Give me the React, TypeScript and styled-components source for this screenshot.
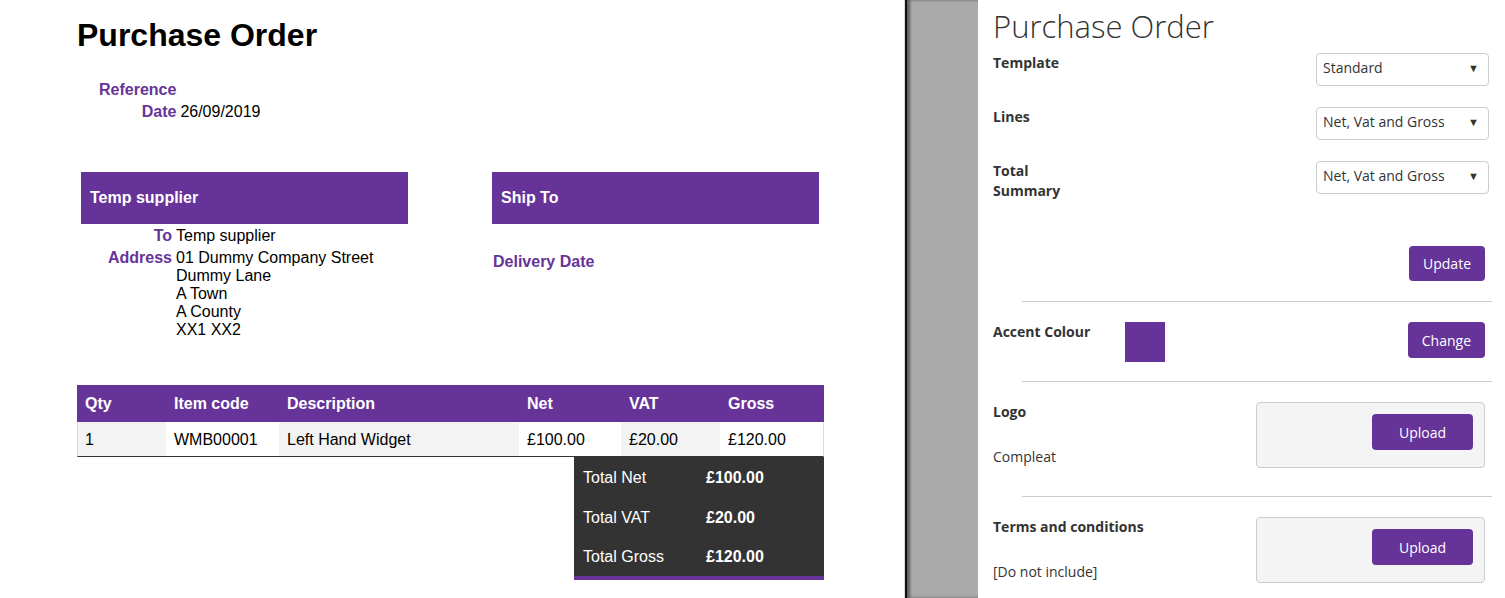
import styled, { createGlobalStyle } from "styled-components";

const PURPLE = "#663399";

type ItemLine = {
  qty: string;
  code: string;
  description: string;
  net: string;
  vat: string;
  gross: string;
};

const columns = [
  { title: "Qty", width: 89 },
  { title: "Item code", width: 113 },
  { title: "Description", width: 240 },
  { title: "Net", width: 102 },
  { title: "VAT", width: 99 },
  { title: "Gross", width: 104 },
];

const lines: ItemLine[] = [
  {
    qty: "1",
    code: "WMB00001",
    description: "Left Hand Widget",
    net: "£100.00",
    vat: "£20.00",
    gross: "£120.00",
  },
];

const totals = [
  { label: "Total Net", value: "£100.00" },
  { label: "Total VAT", value: "£20.00" },
  { label: "Total Gross", value: "£120.00" },
];

const addressLines = [
  "01 Dummy Company Street",
  "Dummy Lane",
  "A Town",
  "A County",
  "XX1 XX2",
];

const GlobalStyle = createGlobalStyle`
  html, body {
    margin: 0;
    padding: 0;
    background: #fff;
  }
  body {
    overflow: hidden;
  }
`;

function App() {
  return (
    <>
      <GlobalStyle />
      <Page>
        <Document>
          <Title>Purchase Order</Title>
          <Meta>
            <Label>Reference</Label>
            <span />
            <Label>Date</Label>
            <span>26/09/2019</span>
          </Meta>

          <Parties>
            <Party>
              <PartyHeader>Temp supplier</PartyHeader>
              <AddressGrid>
                <Label>To</Label>
                <span>Temp supplier</span>
                <Label>Address</Label>
                <div>
                  {addressLines.map((line) => (
                    <div key={line}>{line}</div>
                  ))}
                </div>
              </AddressGrid>
            </Party>
            <Party>
              <PartyHeader>Ship To</PartyHeader>
              <DeliveryDate>
                <Label>Delivery Date</Label>
              </DeliveryDate>
            </Party>
          </Parties>

          <Items>
            <colgroup>
              {columns.map((c) => (
                <col key={c.title} style={{ width: c.width }} />
              ))}
            </colgroup>
            <thead>
              <tr>
                {columns.map((c) => (
                  <HeadCell key={c.title}>{c.title}</HeadCell>
                ))}
              </tr>
            </thead>
            <tbody>
              {lines.map((l) => (
                <ItemRow key={l.code}>
                  <Cell $shade>{l.qty}</Cell>
                  <Cell>{l.code}</Cell>
                  <Cell $shade>{l.description}</Cell>
                  <Cell>{l.net}</Cell>
                  <Cell $shade>{l.vat}</Cell>
                  <Cell>{l.gross}</Cell>
                </ItemRow>
              ))}
            </tbody>
          </Items>

          <TotalsWrap>
            <Totals>
              {totals.map((t) => (
                <TotalRow key={t.label}>
                  <span>{t.label}</span>
                  <TotalValue>{t.value}</TotalValue>
                </TotalRow>
              ))}
            </Totals>
          </TotalsWrap>
        </Document>

        <Gutter />

        <Panel>
          <PanelTitle>Purchase Order</PanelTitle>

          <FieldRow>
            <FieldLabel>Template</FieldLabel>
            <SelectBox>
              <span>Standard</span>
              <Arrow>▼</Arrow>
            </SelectBox>
          </FieldRow>
          <FieldRow>
            <FieldLabel>Lines</FieldLabel>
            <SelectBox>
              <span>Net, Vat and Gross</span>
              <Arrow>▼</Arrow>
            </SelectBox>
          </FieldRow>
          <FieldRow>
            <FieldLabel>Total Summary</FieldLabel>
            <SelectBox>
              <span>Net, Vat and Gross</span>
              <Arrow>▼</Arrow>
            </SelectBox>
          </FieldRow>

          <Actions>
            <Button>Update</Button>
          </Actions>

          <Divider $top={20} />

          <Section>
            <SectionLabel $width={132}>Accent Colour</SectionLabel>
            <Swatch $color={PURPLE} />
            <Button $push>Change</Button>
          </Section>

          <Divider $top={19} />

          <Section>
            <UploadInfo>
              <FieldLabel>Logo</FieldLabel>
              <Note>Compleat</Note>
            </UploadInfo>
            <UploadBox>
              <UploadButton>Upload</UploadButton>
            </UploadBox>
          </Section>

          <Divider $top={28} />

          <Section>
            <UploadInfo>
              <FieldLabel>Terms and conditions</FieldLabel>
              <Note>[Do not include]</Note>
            </UploadInfo>
            <UploadBox>
              <UploadButton>Upload</UploadButton>
            </UploadBox>
          </Section>
        </Panel>
      </Page>
    </>
  );
}

const Page = styled.div`
  display: flex;
  height: 598px;
  overflow: hidden;
`;

/* ---------- document preview ---------- */

const Document = styled.div`
  width: 905px;
  flex-shrink: 0;
  padding-left: 77px;
  box-sizing: border-box;
  border-right: 1px solid #ddd;
  font-family: "Liberation Sans", Arial, sans-serif;
  font-size: 16px;
  color: #000;
`;

const Title = styled.h1`
  margin: 17px 0 0;
  font-size: 32px;
  line-height: 37px;
  font-weight: bold;
`;

const Meta = styled.div`
  display: grid;
  grid-template-columns: auto auto;
  justify-content: start;
  column-gap: 4px;
  margin: 25px 0 0 22px;
  line-height: 22px;
`;

const Label = styled.span`
  color: ${PURPLE};
  font-weight: bold;
  text-align: right;
`;

const Parties = styled.div`
  display: flex;
  align-items: flex-start;
  gap: 84px;
  margin: 49px 0 0 4px;
`;

const Party = styled.div`
  width: 327px;
`;

const PartyHeader = styled.div`
  display: flex;
  align-items: center;
  height: 52px;
  padding-left: 9px;
  background: ${PURPLE};
  color: #fff;
  font-weight: bold;
`;

const AddressGrid = styled.div`
  display: grid;
  grid-template-columns: 91px auto;
  column-gap: 4px;
  row-gap: 4px;
  margin-top: 3px;
  line-height: 18px;
`;

const DeliveryDate = styled.div`
  margin-top: 29px;
  padding-left: 1px;
  line-height: 18px;
`;

const Items = styled.table`
  margin-top: 46px;
  width: 747px;
  border-collapse: separate;
  border-spacing: 0;
  table-layout: fixed;
`;

const HeadCell = styled.th`
  height: 37px;
  padding: 0 8px;
  box-sizing: border-box;
  background: ${PURPLE};
  color: #fff;
  font-weight: bold;
  text-align: left;
`;

const ItemRow = styled.tr`
  td:first-child {
    border-left: 1px solid #ddd;
    padding-left: 7px;
  }
  td:last-child {
    border-right: 1px solid #ddd;
  }
`;

const Cell = styled.td<{ $shade?: boolean }>`
  height: 35px;
  padding: 1px 8px 0;
  box-sizing: border-box;
  border-bottom: 1px solid #333;
  background: ${(p) => (p.$shade ? "#f3f3f3" : "#fff")};
`;

const TotalsWrap = styled.div`
  display: flex;
  justify-content: flex-end;
  width: 747px;
`;

const Totals = styled.div`
  width: 250px;
  background: #333;
  border-bottom: 4px solid ${PURPLE};
  color: #fff;
`;

const TotalRow = styled.div`
  display: grid;
  grid-template-columns: 123px 127px;
  align-items: center;
  height: 39.7px;
  padding-top: 2px;
  box-sizing: border-box;

  span {
    padding-left: 9px;
  }
`;

const TotalValue = styled.span`
  font-weight: bold;
`;

const Gutter = styled.div`
  width: 73px;
  flex-shrink: 0;
  box-sizing: border-box;
  background: #aaa;
  border-left: 2px solid #111;
  box-shadow: inset 3px 0 3px rgba(0, 0, 0, 0.45);
`;

/* ---------- settings panel ---------- */

const Panel = styled.div`
  flex: 1;
  padding: 0 13px 0 15px;
  font-family: "Open Sans", sans-serif;
  font-size: 14px;
  color: #333;
`;

const PanelTitle = styled.h2`
  margin: 6px 0 6px;
  font-size: 31px;
  font-weight: 300;
  line-height: 41px;
`;

const FieldRow = styled.div`
  display: flex;
  justify-content: space-between;
  align-items: flex-start;
  margin-bottom: 21px;
`;

const FieldLabel = styled.div`
  width: 80px;
  font-weight: bold;
  line-height: 20px;
  white-space: normal;
`;

const SelectBox = styled.div`
  display: flex;
  align-items: center;
  justify-content: space-between;
  width: 173px;
  height: 33px;
  margin-right: 3px;
  padding: 0 9px 4px 6px;
  box-sizing: border-box;
  border: 1px solid #ccc;
  border-radius: 4px;
  background: #fff;
`;

const Arrow = styled.span`
  font-size: 11px;
  color: #333;
`;

const Actions = styled.div`
  display: flex;
  justify-content: flex-end;
  padding-top: 24px;
`;

const Button = styled.button<{ $push?: boolean }>`
  height: ${(p) => (p.$push ? "36px" : "35px")};
  margin-right: 7px;
  margin-left: ${(p) => (p.$push ? "auto" : "0")};
  padding: 0 14px;
  border: 0;
  border-radius: 4px;
  background: ${PURPLE};
  color: #fff;
  font-family: "Open Sans", sans-serif;
  font-size: 14px;
`;

const Divider = styled.hr<{ $top: number }>`
  margin: ${(p) => p.$top}px 0 20px 29px;
  border: 0;
  border-top: 1px solid #ccc;
`;

const Section = styled.div`
  display: flex;
  align-items: flex-start;
`;

const SectionLabel = styled.div<{ $width: number }>`
  width: ${(p) => p.$width}px;
  font-weight: bold;
  line-height: 20px;
`;

const Swatch = styled.div<{ $color: string }>`
  width: 40px;
  height: 40px;
  background: ${(p) => p.$color};
`;

const UploadInfo = styled.div`
  display: flex;
  flex-direction: column;
  gap: 25px;

  ${FieldLabel} {
    width: auto;
  }
`;

const Note = styled.div`
  line-height: 20px;
`;

const UploadBox = styled.div`
  display: flex;
  justify-content: flex-end;
  align-items: flex-start;
  width: 229px;
  height: 66px;
  margin: 0 7px 0 auto;
  padding: 11px;
  box-sizing: border-box;
  border: 1px solid #ccc;
  border-radius: 4px;
  background: #f4f4f4;
`;

const UploadButton = styled(Button)`
  width: 101px;
  height: 36px;
  margin-right: 0;
`;

export default App;
